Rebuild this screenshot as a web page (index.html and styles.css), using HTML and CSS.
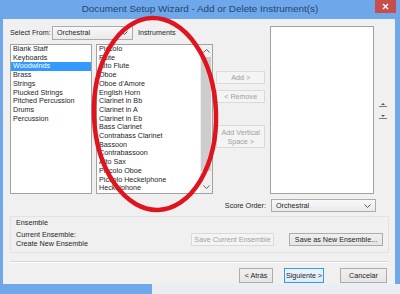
FILE: index.html
```html
<!DOCTYPE html>
<html lang="en">
<head>
    <meta charset="UTF-8">
    <title>Document Setup Wizard</title>
    <link rel="stylesheet" href="styles.css">
</head>
<body>
    <div class="window">
        <div class="titlebar">
            <span></span>
            <span class="title">Document Setup Wizard - Add or Delete Instrument(s)</span>
            <span class="close">
                <svg width="7" height="7" viewBox="0 0 7 7"><path d="M1 1L6 6M6 1L1 6" stroke="#fff" stroke-width="1.4"/></svg>
            </span>
        </div>

        <div class="client">
            <div class="top">
                <div class="pick">
                    <div class="pick-head">
                        <span class="lbl-from">Select From:</span>
                        <div class="combo from">
                            <span>Orchestral</span>
                            <svg class="chev" width="7" height="4" viewBox="0 0 7 4"><path d="M0.5 0.5L3.5 3.5L6.5 0.5" fill="none" stroke="#555"/></svg>
                        </div>
                        <span class="lbl-inst">Instruments</span>
                    </div>
                    <div class="pick-lists">
                        <ul class="list families">
                            <li>Blank Staff</li>
                            <li>Keyboards</li>
                            <li class="selected">Woodwinds</li>
                            <li>Brass</li>
                            <li>Strings</li>
                            <li>Plucked Strings</li>
                            <li>Pitched Percussion</li>
                            <li>Drums</li>
                            <li>Percussion</li>
                        </ul>
                        <div class="list instruments">
                            <ul>
                                <li>Piccolo</li>
                                <li>Flute</li>
                                <li>Alto Flute</li>
                                <li>Oboe</li>
                                <li>Oboe d'Amore</li>
                                <li>English Horn</li>
                                <li>Clarinet in Bb</li>
                                <li>Clarinet in A</li>
                                <li>Clarinet in Eb</li>
                                <li>Bass Clarinet</li>
                                <li>Contrabass Clarinet</li>
                                <li>Bassoon</li>
                                <li>Contrabassoon</li>
                                <li>Alto Sax</li>
                                <li>Piccolo Oboe</li>
                                <li>Piccolo Heckelphone</li>
                                <li>Heckelphone</li>
                            </ul>
                            <div class="scrollbar">
                                <span class="arrow"><svg width="7" height="4" viewBox="0 0 7 4"><path d="M0.5 3.5L3.5 0.5L6.5 3.5" fill="none" stroke="#606060"/></svg></span>
                                <span class="thumb"></span>
                                <span class="arrow"><svg width="7" height="4" viewBox="0 0 7 4"><path d="M0.5 0.5L3.5 3.5L6.5 0.5" fill="none" stroke="#606060"/></svg></span>
                            </div>
                        </div>
                    </div>
                </div>

                <div class="actions">
                    <button class="btn off add">Add &gt;</button>
                    <button class="btn off remove">&lt; Remove</button>
                    <button class="btn off space">Add Vertical<br>Space &gt;</button>
                </div>

                <div class="list chosen"></div>

                <div class="order-btns">
                    <svg width="10" height="6" viewBox="0 0 10 6"><path d="M3 4L5 2L7 4Z" fill="#555"/><path d="M1 5.5H9" stroke="#777"/></svg>
                    <svg width="10" height="6" viewBox="0 0 10 6"><path d="M3 2L5 4L7 2Z" fill="#555"/><path d="M1 5.5H9" stroke="#777"/></svg>
                </div>
            </div>

            <div class="score-row">
                <span class="lbl-score">Score Order:</span>
                <div class="combo score">
                    <span>Orchestral</span>
                    <svg class="chev" width="7" height="4" viewBox="0 0 7 4"><path d="M0.5 0.5L3.5 3.5L6.5 0.5" fill="none" stroke="#555"/></svg>
                </div>
            </div>

            <div class="ensemble">
                <div class="ens-title">Ensemble</div>
                <div class="ens-body">
                    <div class="ens-text">
                        <div>Current Ensemble:</div>
                        <div>Create New Ensemble</div>
                    </div>
                    <button class="btn off save-cur">Save Current Ensemble</button>
                    <button class="btn save-new">Save as New Ensemble...</button>
                </div>
            </div>

            <div class="separator"></div>

            <div class="nav">
                <button class="btn back">&lt; Atrás</button>
                <button class="btn next">Siguiente &gt;</button>
                <button class="btn cancel">Cancelar</button>
            </div>
        </div>

        <div class="bottom-edge"><span class="edge-blue"></span></div>

        <!-- red marker drawn over the dialog -->
        <svg class="marker" width="400" height="294" viewBox="0 0 400 294">
            <ellipse cx="155" cy="114" rx="61" ry="96" transform="rotate(-2 155 114)" fill="none" stroke="#e0141f" stroke-width="4.5"/>
        </svg>
    </div>
</body>
</html>
```

FILE: styles.css
```css
/* Windows 8 style wizard dialog */
* { box-sizing: border-box; }
body { margin: 0; font-family: "Liberation Sans", Arial, sans-serif; font-size: 7.2px; color: #1e1e1e; }

.window { width: 400px; height: 294px; background: #6ea8ea; display: flex; flex-direction: column; position: relative; overflow: hidden; }
.titlebar { height: 19px; flex: none; display: grid; grid-template-columns: 1fr auto 1fr; align-items: start; }
.title { font-size: 9.9px; color: #23466f; line-height: 17px; }
.close { justify-self: end; margin-right: 4px; width: 21px; height: 13px; background: #c84e4e; display: flex; align-items: center; justify-content: center; }

.client { flex: 1; margin: 0 5px 0 3px; background: #f0f0f0; padding: 6px 7px 0 7px; }
.bottom-edge { height: 10px; flex: none; display: flex; background: #eaeef3; }
.edge-blue { width: 152px; background: #6ea8ea; }

/* top area */
.top { display: flex; height: 169px; }
.pick { width: 203px; }
.pick-head { display: flex; align-items: center; height: 15px; }
.lbl-from { width: 42px; }
.lbl-inst { margin-left: 5px; }
.combo { height: 14px; border: 1px solid #acacac; background: linear-gradient(#f8f8f8, #eaeaea); display: flex; align-items: center; justify-content: space-between; padding: 0 4px 0 4px; }
.combo.from { width: 81px; }
.combo.score { width: 105px; height: 13px; }

.pick-lists { display: flex; gap: 4px; margin-top: 4px; height: 150px; }
.list { background: #fff; border: 1px solid #a2a2a2; }
.list ul, ul.list { list-style: none; margin: 0; padding: 0; }
.families { width: 82px; }
.families li, .instruments li { line-height: 8.7px; padding-left: 2px; white-space: nowrap; }
.families li.selected { background: #3399ff; color: #fff; }
.instruments { width: 117px; display: flex; }
.instruments ul { flex: 1; overflow: hidden; }
.scrollbar { width: 12px; display: flex; flex-direction: column; background: #f0f0f0; }
.scrollbar .arrow { height: 12px; display: flex; align-items: center; justify-content: center; }
.scrollbar .thumb { flex: 1; margin: 0 1px 10px 1px; background: #cdcdcd; }

/* buttons */
.btn { font: inherit; color: #1e1e1e; padding: 0; border: 1px solid #acacac; background: linear-gradient(#f0f0f0, #e5e5e5); line-height: 9px; white-space: nowrap; }
.btn.off { color: #a0a0a0; border-color: #dadada; background: #f4f4f4; }
.actions { width: 50px; margin-left: 3px; display: flex; flex-direction: column; }
.actions .btn { height: 13px; }
.actions .add { margin-top: 46px; }
.actions .remove { margin-top: 6px; }
.actions .space { margin-top: 22px; height: 23px; }
.chosen { width: 105px; margin-left: 5px; margin-top: 1px; height: 168px; }
.order-btns { margin-left: 4px; margin-top: 76px; display: flex; flex-direction: column; gap: 6px; }

.score-row { display: flex; align-items: center; margin-top: 5px; height: 13px; }
.lbl-score { margin-left: 206px; width: 50px; text-align: right; margin-right: 5px; }

/* ensemble group */
.ensemble { margin-top: 4px; height: 37px; width: 379px; border: 1px solid #e3e3e3; padding: 1px 5px 0 5px; }
.ens-title { line-height: 9px; }
.ens-body { display: flex; align-items: center; margin-top: 3px; }
.ens-text { flex: 1; line-height: 9px; }
.save-cur { width: 83px; height: 13px; }
.save-new { width: 94px; height: 13px; margin-left: 15px; }

.separator { margin-top: 8px; border-top: 1px solid #d6d6d6; border-bottom: 1px solid #fff; }

.nav { display: flex; justify-content: flex-end; margin-top: 5px; padding-right: 1px; }
.nav .btn { height: 15px; }
.back { width: 34px; }
.next { width: 40px; margin-left: 11px; border-color: #3399ff !important; background: linear-gradient(#ecf4fc, #dcecfc); }
.cancel { width: 47px; margin-left: 16px; }

.marker { position: absolute; left: 0; top: 0; pointer-events: none; }
```
